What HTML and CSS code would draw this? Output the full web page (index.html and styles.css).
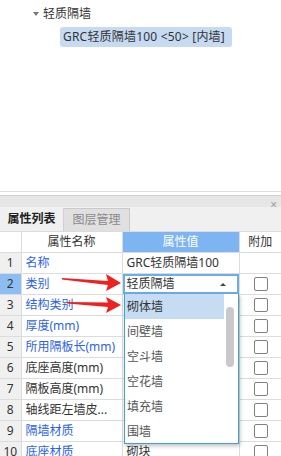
FILE: index.html
```html
<!DOCTYPE html>
<html lang="zh-CN">
  <head>
    <meta charset="UTF-8" />
    <title>属性列表</title>
    <link rel="stylesheet" href="styles.css">
  </head>

  <body>
    <!-- 构件树 -->
    <div class="tree">
      <div class="node-parent"><span class="caret"></span>轻质隔墙</div>
      <div class="node-child">GRC轻质隔墙100 &lt;50&gt; [内墙]</div>
    </div>

    <!-- 属性面板 -->
    <div class="panel">
      <div class="panel-title"><span class="close">×</span></div>
      <div class="tabs">
        <div class="tab active">属性列表</div>
        <div class="tab">图层管理</div>
      </div>

      <table class="props">
        <colgroup>
          <col class="c-num" />
          <col class="c-name" />
          <col class="c-value" />
          <col class="c-extra" />
        </colgroup>
        <thead>
          <tr>
            <th></th>
            <th>属性名称</th>
            <th class="th-value">属性值</th>
            <th>附加</th>
          </tr>
        </thead>
        <tbody>
          <tr>
            <td class="num">1</td>
            <td class="name blue">名称</td>
            <td class="value">GRC轻质隔墙100</td>
            <td></td>
          </tr>
          <tr>
            <td class="num current">2</td>
            <td class="name blue">类别</td>
            <td class="value editing">轻质隔墙<span class="up"></span></td>
            <td><span class="cb"></span></td>
          </tr>
          <tr>
            <td class="num">3</td>
            <td class="name blue">结构类别</td>
            <td class="value"></td>
            <td><span class="cb"></span></td>
          </tr>
          <tr>
            <td class="num">4</td>
            <td class="name blue">厚度(mm)</td>
            <td class="value"></td>
            <td><span class="cb"></span></td>
          </tr>
          <tr>
            <td class="num">5</td>
            <td class="name blue">所用隔板长(mm)</td>
            <td class="value"></td>
            <td><span class="cb"></span></td>
          </tr>
          <tr>
            <td class="num">6</td>
            <td class="name">底座高度(mm)</td>
            <td class="value"></td>
            <td><span class="cb"></span></td>
          </tr>
          <tr>
            <td class="num">7</td>
            <td class="name">隔板高度(mm)</td>
            <td class="value"></td>
            <td><span class="cb"></span></td>
          </tr>
          <tr>
            <td class="num">8</td>
            <td class="name">轴线距左墙皮...</td>
            <td class="value"></td>
            <td><span class="cb"></span></td>
          </tr>
          <tr>
            <td class="num">9</td>
            <td class="name blue">隔墙材质</td>
            <td class="value"></td>
            <td><span class="cb"></span></td>
          </tr>
          <tr>
            <td class="num">10</td>
            <td class="name blue">底座材质</td>
            <td class="value">砌块</td>
            <td><span class="cb"></span></td>
          </tr>
        </tbody>
      </table>
    </div>

    <!-- 类别下拉列表 -->
    <div class="dropdown">
      <div class="item selected">砌体墙</div>
      <div class="item">间壁墙</div>
      <div class="item">空斗墙</div>
      <div class="item">空花墙</div>
      <div class="item">填充墙</div>
      <div class="item">围墙</div>
      <div class="thumb"></div>
    </div>

    <!-- 标注箭头 -->
    <svg class="arrows" width="281" height="456" viewBox="0 0 281 456">
      <polygon points="62,278 108,281 106,274 121,283 106,291 108,285 62,279.5" />
      <polygon points="67,302 108,302.5 106,297 121,305 106,313 108,307 67,303.5" />
    </svg>
  </body>
</html>
```

FILE: styles.css
```css
/* 全局 */
body {
  margin: 0;
  width: 281px;
  height: 456px;
  overflow: hidden;
  position: relative;
  background: #ffffff;
  font-family: "Noto Sans", "Noto Sans CJK SC", sans-serif;
  font-size: 12px;
  color: #333333;
}

/* 构件树 */
.tree {
  height: 192px;
  padding-top: 4px;
  box-sizing: border-box;
  border-bottom: 1px solid #dddddd;
}

.node-parent {
  height: 20px;
  line-height: 20px;
  padding-left: 33px;
  display: flex;
  align-items: center;
}

.caret {
  width: 0;
  height: 0;
  border-left: 3px solid transparent;
  border-right: 3px solid transparent;
  border-top: 4px solid #777777;
  margin-right: 4px;
}

.node-child {
  display: inline-block;
  margin: 3px 0 0 60px;
  width: 172px;
  height: 20px;
  line-height: 20px;
  padding-left: 3px;
  box-sizing: border-box;
  background: #c6dbf1;
  border-radius: 3px;
  letter-spacing: 0.2px;
}

/* 面板 */
.panel {
  margin-top: 3px;
}

.panel-title {
  height: 11px;
  background: #e6e6e6;
  border-top: 1px solid #d0d0d0;
  text-align: right;
  padding-right: 4px;
}

.close {
  font-size: 12px;
  line-height: 11px;
  color: #a0a0a0;
}

.tabs {
  height: 24px;
  background: #f0f0f0;
  display: flex;
  align-items: flex-end;
}

.tab {
  height: 23px;
  line-height: 22px;
  text-align: center;
  box-sizing: border-box;
}

.tab.active {
  width: 64px;
  font-weight: 600;
  color: #222222;
  border-right: 1px solid #d0d0d0;
}

.tab:not(.active) {
  width: 66px;
  background: #e0e0e0;
  color: #8a8a8a;
  border: 1px solid #cacaca;
  border-left: none;
  border-bottom: none;
}

/* 属性表 */
.props {
  width: 281px;
  table-layout: fixed;
  border-collapse: collapse;
}

.c-num { width: 21px; }
.c-name { width: 101px; }
.c-value { width: 117px; }
.c-extra { width: 42px; }

.props th,
.props td {
  height: 20px;
  padding: 0 0 0 4px;
  border: 1px solid #dcdcdc;
  white-space: nowrap;
  overflow: hidden;
  font-weight: normal;
  line-height: 18px;
}

.props th {
  text-align: center;
  padding: 0;
  color: #333333;
}

.props tr > :first-child {
  border-left: none;
}

.props tr > :last-child {
  border-right: none;
}

.props .th-value {
  background: #7db5f2;
  color: #ffffff;
}

.num {
  background: #f0f0f0;
  text-align: center;
  padding: 0 !important;
}

.num.current {
  background: #8dbdf2;
}

.blue {
  color: #2c62ea;
}

.value {
  position: relative;
}

.editing {
  box-shadow: inset 0 0 0 2px #6aaee8;
}

.up {
  position: absolute;
  right: 13px;
  top: 9px;
  width: 0;
  height: 0;
  border-left: 3px solid transparent;
  border-right: 3px solid transparent;
  border-bottom: 3px solid #444444;
}

.cb {
  display: block;
  width: 12px;
  height: 12px;
  margin: 0 auto 0 10px;
  border: 1px solid #808080;
  border-radius: 2px;
}

/* 下拉列表 */
.dropdown {
  position: absolute;
  left: 124px;
  top: 294px;
  width: 115px;
  height: 150px;
  box-sizing: border-box;
  border: 1px solid #3ea1da;
  border-top: none;
  background: #ffffff;
  box-shadow: 1px 2px 4px rgba(0, 0, 0, 0.25);
}

.item {
  width: 99px;
  height: 25px;
  line-height: 25px;
  padding-left: 2px;
  box-sizing: border-box;
  color: #555555;
}

.item.selected {
  background: #c6dcf2;
  color: #333333;
}

.thumb {
  position: absolute;
  left: 101px;
  top: 13px;
  width: 8px;
  height: 60px;
  border-radius: 4px;
  background: #c9c9c9;
}

/* 箭头 */
.arrows {
  position: absolute;
  left: 0;
  top: 0;
  pointer-events: none;
}

.arrows polygon {
  fill: #ee2020;
}
```
